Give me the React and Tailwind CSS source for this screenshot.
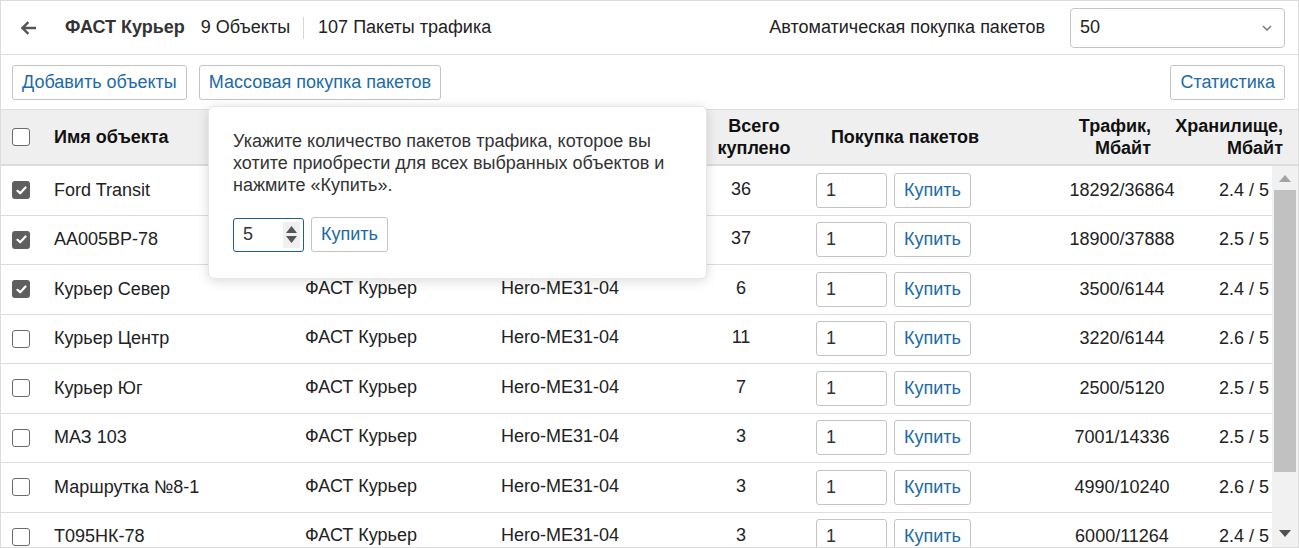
import React from 'react';

const rows = [
  { name: 'Ford Transit', checked: true, total: 36, traffic: '18292/36864', storage: '2.4 / 5' },
  { name: 'АА005ВР-78', checked: true, total: 37, traffic: '18900/37888', storage: '2.5 / 5' },
  { name: 'Курьер Север', checked: true, total: 6, traffic: '3500/6144', storage: '2.4 / 5' },
  { name: 'Курьер Центр', checked: false, total: 11, traffic: '3220/6144', storage: '2.6 / 5' },
  { name: 'Курьер Юг', checked: false, total: 7, traffic: '2500/5120', storage: '2.5 / 5' },
  { name: 'МАЗ 103', checked: false, total: 3, traffic: '7001/14336', storage: '2.5 / 5' },
  { name: 'Маршрутка №8-1', checked: false, total: 3, traffic: '4990/10240', storage: '2.6 / 5' },
  { name: 'Т095НК-78', checked: false, total: 3, traffic: '6000/11264', storage: '2.4 / 5' },
];

function Checkbox({ checked }) {
  if (checked) {
    return (
      <div className="w-[18px] h-[18px] rounded-[3px] bg-[#5f5f5f] flex items-center justify-center">
        <svg width="11" height="9" viewBox="0 0 11 9" fill="none">
          <path d="M1.5 4.8 4.2 7.3 9.5 1.5" stroke="white" strokeWidth="2.2" strokeLinecap="round" strokeLinejoin="round" />
        </svg>
      </div>
    );
  }
  return <div className="w-[18px] h-[18px] rounded-[3px] border-[1.5px] border-[#6a6a6a] bg-white" />;
}

function Btn({ children, className = '' }) {
  return (
    <button className={`h-[35px] px-[9px] border border-[#c4c4c4] rounded-[3px] bg-white text-[#1c6aa6] whitespace-nowrap ${className}`}>
      {children}
    </button>
  );
}

export default function App() {
  return (
    <div
      className="relative w-[1299px] h-[548px] border border-[#dcdcdc] bg-white overflow-hidden flex flex-col text-[18px] text-[#222]"
      style={{ fontFamily: '"Liberation Sans", Arial, sans-serif' }}
    >
      {/* Top bar */}
      <div className="h-[54px] shrink-0 border-b border-[#dcdcdc] flex items-center pl-[19px] pr-[13px]">
        <svg width="16" height="14" viewBox="0 0 16 14" fill="none">
          <path d="M15 7H2.5M7.5 2 2.5 7l5 5" stroke="#555" strokeWidth="2.4" strokeLinecap="square" />
        </svg>
        <span className="ml-[29px] font-bold text-[#333]">ФАСТ Курьер</span>
        <span className="ml-[16px]">9 Объекты</span>
        <span className="ml-[13px] w-px h-[22px] bg-[#d6d6d6]" />
        <span className="ml-[14px]">107 Пакеты трафика</span>
        <span className="ml-auto">Автоматическая покупка пакетов</span>
        <div className="ml-[25px] w-[215px] h-[40px] border border-[#c4c4c4] rounded-[4px] flex items-center pl-[9px] pr-[12px]">
          <span>50</span>
          <svg className="ml-auto" width="10" height="6" viewBox="0 0 10 6" fill="none">
            <path d="M1 1l4 4 4-4" stroke="#777" strokeWidth="1.5" />
          </svg>
        </div>
      </div>

      {/* Toolbar */}
      <div className="h-[55px] shrink-0 border-b border-[#dcdcdc] flex items-center pl-[11px] pr-[13px] gap-[12px]">
        <Btn>Добавить объекты</Btn>
        <Btn>Массовая покупка пакетов</Btn>
        <Btn className="ml-auto">Статистика</Btn>
      </div>

      {/* Table header */}
      <div className="h-[56px] shrink-0 bg-[#efefef] border-b-2 border-[#dcdcdc] flex items-center font-bold text-[#111] leading-[22px]">
        <div className="w-[53px] shrink-0 pl-[11px]"><Checkbox /></div>
        <div className="w-[251px] shrink-0">Имя объекта</div>
        <div className="w-[196px] shrink-0" />
        <div className="w-[199px] shrink-0" />
        <div className="w-[108px] shrink-0 text-center">Всего<br />куплено</div>
        <div className="w-[194px] shrink-0 text-center">Покупка пакетов</div>
        <div className="w-[149px] shrink-0 text-right">Трафик,<br />Мбайт</div>
        <div className="w-[132px] shrink-0 text-right whitespace-nowrap">Хранилище,<br />Мбайт</div>
      </div>

      {/* Body */}
      <div className="flex-1 flex min-h-0">
        <div className="flex-1 min-w-0 overflow-hidden">
          {rows.map((r) => (
            <div key={r.name} className="h-[49.5px] border-b border-[#dcdcdc] flex items-center whitespace-nowrap">
              <div className="w-[53px] shrink-0 pl-[11px]"><Checkbox checked={r.checked} /></div>
              <div className="w-[251px] shrink-0">{r.name}</div>
              <div className="w-[196px] shrink-0 -mt-[2px]">ФАСТ Курьер</div>
              <div className="w-[199px] shrink-0 -mt-[2px]">Hero-ME31-04</div>
              <div className="w-[108px] shrink-0 text-center pr-[26px] -mt-[2px]">{r.total}</div>
              <div className="w-[194px] shrink-0 flex items-center gap-[7px] pl-[8px]">
                <div className="w-[71px] h-[35px] border border-[#c4c4c4] rounded-[3px] flex items-center pl-[9px] text-[#333]">1</div>
                <Btn className="w-[77px] px-0">Купить</Btn>
              </div>
              <div className="w-[180px] shrink-0 text-center pl-[60px]">{r.traffic}</div>
              <div className="flex-1 text-right pr-[3px]">{r.storage}</div>
            </div>
          ))}
        </div>
        {/* Scrollbar */}
        <div className="w-[26px] shrink-0 bg-[#f1f1f1] flex flex-col items-center">
          <svg className="mt-[9px]" width="12" height="7" viewBox="0 0 12 7"><path d="M6 0 12 7H0z" fill="#a3a3a3" /></svg>
          <div className="mt-[8px] w-[22px] h-[282px] bg-[#c1c1c1]" />
          <svg className="mt-auto mb-[10px]" width="12" height="7" viewBox="0 0 12 7"><path d="M0 0h12L6 7z" fill="#505050" /></svg>
        </div>
      </div>

      {/* Popover */}
      <div className="absolute left-[207px] top-[105px] w-[499px] h-[173px] bg-white rounded-[6px] border border-[#e6e6e6] shadow-[0_2px_12px_rgba(0,0,0,0.15)] pl-[24px] pt-[23px]">
        <p className="leading-[22px] text-[#333] whitespace-nowrap">
          Укажите количество пакетов трафика, которое вы<br />
          хотите приобрести для всех выбранных объектов и<br />
          нажмите «Купить».
        </p>
        <div className="mt-[21px] flex items-center gap-[7px]">
          <div className="w-[71px] h-[34px] border border-[#1d5f8e] rounded-[3px] flex items-center pl-[9px] pr-[3px] text-[#333]">
            <span>5</span>
            <div className="ml-auto w-[17px] h-[26px] bg-[#efefef] flex flex-col items-center justify-center gap-[3px]">
              <svg width="11" height="7" viewBox="0 0 11 7"><path d="M5.5 0 11 7H0z" fill="#555" /></svg>
              <svg width="11" height="7" viewBox="0 0 11 7"><path d="M0 0h11L5.5 7z" fill="#555" /></svg>
            </div>
          </div>
          <Btn className="w-[77px] h-[34px] px-0">Купить</Btn>
        </div>
      </div>
    </div>
  );
}
